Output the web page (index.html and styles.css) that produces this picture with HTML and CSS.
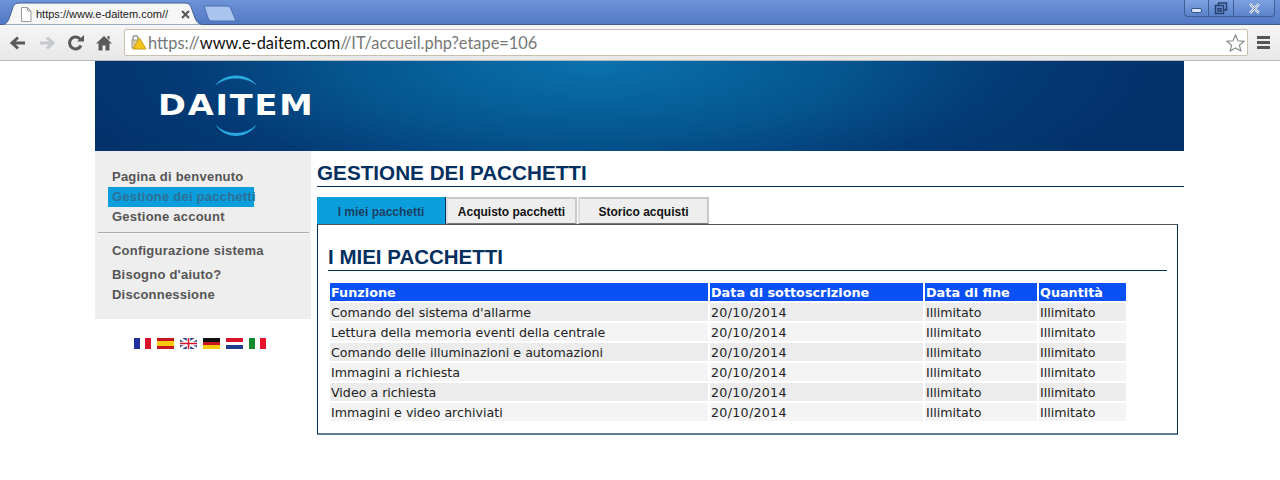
FILE: index.html
```html
<!doctype html>
<html lang="it">
  <head>
    <meta charset="utf-8"/>
    <title>Gestione dei pacchetti</title>
    <link rel="stylesheet" href="styles.css">
  </head>
  <body>
    <div class="tab-strip">
      <div class="tab">
        <svg class="tab-shape" width="206" height="25" viewBox="0 0 206 25"><path d="M0 25C6 25 8 22 10 16L13 7C14 4 16 3 20 3H184C188 3 190 4 191 7L195 18C197 23 200 25 206 25Z" fill="#f6f6f6" stroke="#3e5f96"/></svg>
        <svg class="page-icon" width="12" height="15" viewBox="0 0 12 15"><path d="M1.5 .5H7.5L11 4V14.500H1.500Z M7.500 .5V4H11" fill="#fff" stroke="#9a9a9a"/></svg>
        <span class="tab-title">https://www.e-daitem.com//</span>
        <svg class="tab-close" width="9" height="9" viewBox="0 0 9 9"><path d="M1 1L8 8M8 1L1 8" stroke="#555" stroke-width="2"/></svg>
      </div>
      <svg class="new-tab" width="34" height="17" viewBox="0 0 34 17"><path d="M1 1H24C26 1 27 2 28 4L33 16H9C7 16 6 15 5 13Z" fill="#a9c4ee" stroke="#4a6fae"/></svg>
      <div class="window-buttons">
        <div class="win-btn win-min"><span></span></div>
        <div class="win-btn win-max"><svg width="14" height="13" viewBox="0 0 14 13"><path d="M4.500 3.500V1H12.500V8H9.500M1.500 3.500H9.500V11.500H1.500Z M4 6.500H7V9H4Z" fill="none" stroke="#26406f" stroke-width="1.500"/></svg></div>
        <div class="win-btn win-close"><svg width="13" height="11" viewBox="0 0 13 11"><path d="M2 1L11 10M11 1L2 10" stroke="#e6edf8" stroke-width="2.500"/><path d="M2 1L11 10M11 1L2 10" stroke="#3f5f94" stroke-width=".6"/></svg></div>
      </div>
    </div>
    <div class="toolbar">
      <svg class="tool" width="18" height="16" viewBox="0 0 18 16"><path d="M16 8H4M9 2.500L3 8L9 13.500" fill="none" stroke="#5a5a5a" stroke-width="3"/></svg>
      <svg class="tool" width="18" height="16" viewBox="0 0 18 16"><path d="M2 8H14M9 2.500L15 8L9 13.500" fill="none" stroke="#c4c7cb" stroke-width="3"/></svg>
      <svg class="tool" width="18" height="16" viewBox="0 0 18 16"><path d="M14 10.500A6 6 0 1 1 13.500 4.500" fill="none" stroke="#5a5a5a" stroke-width="3"/><path d="M10 6.500H17V0Z" fill="#5a5a5a"/></svg>
      <svg class="tool" width="16" height="16" viewBox="0 0 16 16"><path d="M8 1L16 8.500H13.500V15.500H9.500V10.500H6.500V15.500H2.500V8.500H0Z M11.500 1H13.500V5L11.500 3.500Z" fill="#5a5a5a"/></svg>
      <div class="omnibox">
        <svg class="lock" width="16" height="17" viewBox="0 0 16 17"><path d="M2 7V4C2 1 7 1 7 4V7" fill="none" stroke="#999" stroke-width="1.500"/><rect x="1" y="6" width="8" height="8" fill="#d6c9a0" stroke="#999"/><path d="M8.500 4L15 15H2Z" fill="#f5c518" stroke="#c99a10"/></svg>
        <span class="url"><span class="url-dim">https://</span>www.e-daitem.com<span class="url-dim">//IT/accueil.php?etape=106</span></span>
        <svg class="star" width="19" height="18" viewBox="0 0 19 18"><path d="M9.500 1L12 6.800L18 7.300L13.400 11.200L14.900 17L9.500 14L4.100 17L5.600 11.200L1 7.300L7 6.800Z" fill="#fff" stroke="#8c8c8c" stroke-width="1.200"/></svg>
      </div>
      <div class="menu-icon"><span></span><span></span><span></span></div>
    </div>

    <div class="page">
      <div class="banner">
        <div class="logo">
          <svg class="logo-arc" width="44" height="12" viewBox="0 0 44 12"><path d="M1 11C10 -3 34 -3 43 11C33 1 11 1 1 11Z" fill="#29a9e0"/></svg>
          <div class="logo-name">DAITEM</div>
          <svg class="logo-arc" width="44" height="14" viewBox="0 0 44 14"><path d="M1 1C11 13 33 13 43 1C34 17 10 17 1 1Z" fill="#29a9e0"/></svg>
        </div>
      </div>
      <div class="columns">
        <div class="side">
          <div class="side-menu">
            <a class="side-link">Pagina di benvenuto</a>
            <a class="side-link side-active">Gestione dei pacchetti</a>
            <a class="side-link">Gestione account</a>
            <div class="side-sep"></div>
            <a class="side-link side-conf">Configurazione sistema</a>
            <a class="side-link">Bisogno d'aiuto?</a>
            <a class="side-link">Disconnessione</a>
          </div>
          <div class="flags">
            <span class="flag flag-fr"></span>
            <span class="flag flag-es"></span>
            <svg class="flag" viewBox="0 0 17 11"><rect width="17" height="11" fill="#2b3f8c"/><path d="M0 0L17 11M17 0L0 11" stroke="#fff" stroke-width="2.500"/><path d="M8.500 0V11M0 5.500H17" stroke="#fff" stroke-width="3.500"/><path d="M8.500 0V11M0 5.500H17" stroke="#d6142b" stroke-width="1.500"/></svg>
            <span class="flag flag-de"></span>
            <span class="flag flag-nl"></span>
            <span class="flag flag-it"></span>
          </div>
        </div>
        <div class="main">
          <h1 class="page-title">GESTIONE DEI PACCHETTI</h1>
          <div class="tabs">
            <div class="pack-tab pack-tab-on">I miei pacchetti</div>
            <div class="pack-tab">Acquisto pacchetti</div>
            <div class="pack-tab">Storico acquisti</div>
          </div>
          <div class="panel">
            <h2 class="panel-title">I MIEI PACCHETTI</h2>
            <table class="packs">
              <thead>
                <tr><th class="col-name">Funzione</th><th class="col-start">Data di sottoscrizione</th><th class="col-end">Data di fine</th><th class="col-qty">Quantità</th></tr>
              </thead>
              <tbody>
                <tr><td>Comando del sistema d'allarme</td><td>20/10/2014</td><td>Illimitato</td><td>Illimitato</td></tr>
                <tr><td>Lettura della memoria eventi della centrale</td><td>20/10/2014</td><td>Illimitato</td><td>Illimitato</td></tr>
                <tr><td>Comando delle illuminazioni e automazioni</td><td>20/10/2014</td><td>Illimitato</td><td>Illimitato</td></tr>
                <tr><td>Immagini a richiesta</td><td>20/10/2014</td><td>Illimitato</td><td>Illimitato</td></tr>
                <tr><td>Video a richiesta</td><td>20/10/2014</td><td>Illimitato</td><td>Illimitato</td></tr>
                <tr><td>Immagini e video archiviati</td><td>20/10/2014</td><td>Illimitato</td><td>Illimitato</td></tr>
              </tbody>
            </table>
          </div>
        </div>
      </div>
    </div>
  </body>
</html>
```

FILE: styles.css
```css
* {
  box-sizing: border-box;
}
html, body {
  margin: 0;
  padding: 0;
  background: #ffffff;
  overflow: hidden;
}
body {
  font-family: "DejaVu Sans", sans-serif;
}
.tab-strip {
  height: 25px;
  display: flex;
  align-items: flex-start;
  background: linear-gradient(#6d94d8, #5279c4);
  border-bottom: 1px solid #3e5f96;
}
.tab {
  position: relative;
  width: 206px;
  height: 25px;
  flex: none;
  display: flex;
  align-items: center;
  padding: 3px 0 0 20px;
}
.tab-shape {
  position: absolute;
  left: 0;
  top: 0;
}
.page-icon, .tab-title, .tab-close {
  position: relative;
}
.tab-title {
  margin-left: 4px;
  width: 137px;
  white-space: nowrap;
  font-family: "Liberation Sans", sans-serif;
  font-size: 11px;
  color: #222222;
}
.tab-close {
  margin-left: 8px;
}
.new-tab {
  margin: 5px 0 0 -3px;
}
.window-buttons {
  margin-left: auto;
  margin-right: 5px;
  display: flex;
  height: 17px;
  border: 1px solid #3e5f96;
  border-top: none;
  border-radius: 0 0 4px 4px;
  background: linear-gradient(#7ea2e0, #5b82cb);
}
.win-btn {
  height: 16px;
  display: flex;
  align-items: center;
  justify-content: center;
  border-left: 1px solid #3e5f96;
}
.win-min {
  width: 23px;
  border-left: none;
}
.win-min span {
  display: block;
  width: 11px;
  height: 5px;
  margin-top: 4px;
  border-radius: 2px;
  background: #dce6f6;
  border: 1px solid #35568c;
}
.win-max {
  width: 25px;
}
.win-close {
  width: 41px;
}
.toolbar {
  height: 36px;
  display: flex;
  align-items: center;
  padding: 0 0 0 9px;
  background: linear-gradient(#f5f5f5, #e8e8e8);
  border-bottom: 1px solid #b9b9b9;
}
.tool {
  flex: none;
  margin-right: 11px;
}
.omnibox {
  width: 1124px;
  height: 27px;
  margin-left: 1px;
  display: flex;
  align-items: center;
  padding: 0 2px 0 6px;
  background: #ffffff;
  border: 1px solid #c8bfae;
  border-radius: 2px;
}
.lock {
  flex: none;
}
.url {
  margin-left: 1px;
  font-family: Lato, sans-serif;
  font-size: 16.400px;
  color: #111111;
  white-space: nowrap;
}
.url-dim {
  color: #777777;
}
.star {
  margin-left: auto;
}
.menu-icon {
  margin-left: 9px;
  width: 13px;
  display: flex;
  flex-direction: column;
  gap: 2px;
}
.menu-icon span {
  display: block;
  height: 3px;
  background: #555555;
}
.page {
  width: 1089px;
  margin-left: 95px;
}
.banner {
  height: 90px;
  display: flex;
  padding-left: 65px;
  background: radial-gradient(ellipse 560px 170px at 500px 0, #0a72ad 0%, #05558f 45%, #043a75 75%, #03326b 100%);
}
.logo {
  width: 152px;
  display: flex;
  flex-direction: column;
  align-items: center;
  padding-top: 14px;
}
.logo-name {
  height: 36px;
  font-weight: 700;
  font-size: 28px;
  line-height: 38px;
  letter-spacing: 1.5px;
  color: #ffffff;
  transform: scaleX(1.2);
}
.columns {
  display: flex;
}
.side {
  width: 216px;
  flex: none;
}
.side-menu {
  height: 168px;
  padding-top: 16px;
  background: #eeeeee;
  display: flex;
  flex-direction: column;
  align-items: flex-start;
}
.side-link {
  display: block;
  height: 20px;
  line-height: 20px;
  margin-left: 13px;
  padding: 0 0 0 4px;
  font-family: "Liberation Sans", sans-serif;
  font-weight: 700;
  font-size: 13px;
  letter-spacing: .23px;
  color: #555555;
  white-space: nowrap;
}
.side-active {
  background: #0a9fdc;
  color: #2f6f98;
  width: 146px;
}
.side-sep {
  width: 211px;
  margin: 5px 0 7px 3px;
  border-top: 1px solid #aaaaaa;
  border-bottom: 1px solid #f8f8f8;
}
.side-conf {
  margin-bottom: 4px;
}
.flags {
  display: flex;
  justify-content: center;
  gap: 6px;
  padding: 19px 6px 0 0;
}
.flag {
  display: block;
  width: 17px;
  height: 11px;
}
.flag-fr {
  background: linear-gradient(90deg, #1f2f9c 33%, #ffffff 33% 66%, #d8142b 66%);
}
.flag-es {
  background: linear-gradient(#c8141e 25%, #f7c90f 25% 75%, #c8141e 75%);
}
.flag-de {
  background: linear-gradient(#111111 33%, #c8141e 33% 66%, #f7c90f 66%);
}
.flag-nl {
  background: linear-gradient(#d8142b 33%, #ffffff 33% 66%, #1f3f8c 66%);
}
.flag-it {
  background: linear-gradient(90deg, #118a2e 33%, #ffffff 33% 66%, #e8142b 66%);
}
.main {
  width: 867px;
  margin-left: 6px;
}
.page-title {
  margin: 0;
  height: 36px;
  padding-top: 9px;
  font-family: "Liberation Sans", sans-serif;
  font-size: 20.700px;
  line-height: 26px;
  font-weight: 700;
  color: #03305f;
  border-bottom: 1px solid #03305f;
}
.tabs {
  display: flex;
  margin-top: 10px;
  height: 27px;
}
.pack-tab {
  height: 27px;
  margin-right: 1px;
  line-height: 27px;
  text-align: center;
  white-space: nowrap;
  font-family: "Liberation Sans", sans-serif;
  font-weight: 700;
  font-size: 12px;
  color: #111111;
  background: #eeeeee;
  border: 2px solid #c9c9c9;
  border-left-color: #dddddd;
  border-bottom: 1px solid #777777;
  width: 131px;
}
.pack-tab-on {
  width: 129px;
  margin-right: 0;
  line-height: 30px;
  background: #0a9fdc;
  border: none;
  border-right: 1px solid #03305f;
  color: #1a3f66;
}
.panel {
  width: 861px;
  height: 211px;
  padding: 20px 10px 0 10px;
  border: 1px solid #03305f;
  border-bottom: 2px solid #5f7f99;
  border-top-color: #555555;
}
.panel-title {
  margin: 0;
  width: 839px;
  height: 26px;
  font-family: "Liberation Sans", sans-serif;
  font-size: 20.500px;
  line-height: 24px;
  font-weight: 700;
  color: #03305f;
  border-bottom: 1px solid #03305f;
}
.packs {
  margin-top: 10px;
  border-collapse: separate;
  border-spacing: 2px;
  table-layout: fixed;
  width: 800px;
  font-size: 12.640px;
}
.col-name {
  width: 378px;
}
.col-start {
  width: 213px;
}
.col-end {
  width: 112px;
}
.col-qty {
  width: 87px;
}
.packs th {
  height: 18px;
  padding: 2px 1px 0;
  background: #0a50f5;
  color: #ffffff;
  font-weight: 700;
  font-size: 12.800px;
  line-height: 16px;
  text-align: left;
}
.packs td {
  height: 18px;
  padding: 2px 1px 0;
  line-height: 16px;
  color: #222222;
  white-space: nowrap;
}
.packs td:nth-child(2) {
  letter-spacing: .3px;
}
.packs tbody tr:nth-child(odd) td {
  background: #ececec;
}
.packs tbody tr:nth-child(even) td {
  background: #f4f4f4;
}
```
